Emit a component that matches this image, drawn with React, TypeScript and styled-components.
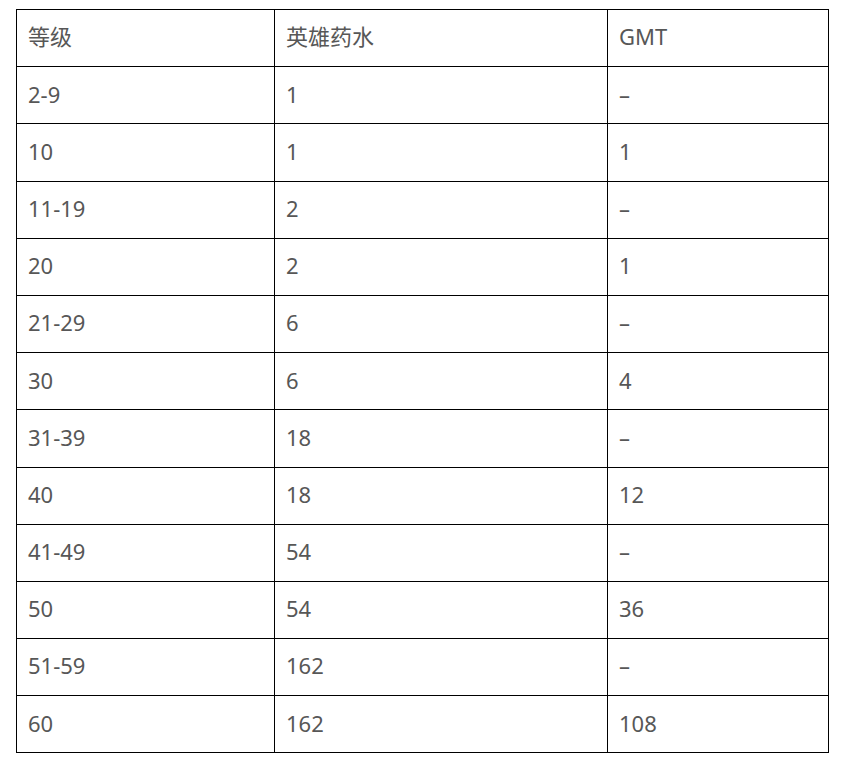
import React from 'react';
import styled, { createGlobalStyle } from 'styled-components';

// -- 데이터 --
interface LevelRow {
  level: string;
  potion: string;
  gmt: string;
}

const rows: LevelRow[] = [
  { level: '2-9', potion: '1', gmt: '–' },
  { level: '10', potion: '1', gmt: '1' },
  { level: '11-19', potion: '2', gmt: '–' },
  { level: '20', potion: '2', gmt: '1' },
  { level: '21-29', potion: '6', gmt: '–' },
  { level: '30', potion: '6', gmt: '4' },
  { level: '31-39', potion: '18', gmt: '–' },
  { level: '40', potion: '18', gmt: '12' },
  { level: '41-49', potion: '54', gmt: '–' },
  { level: '50', potion: '54', gmt: '36' },
  { level: '51-59', potion: '162', gmt: '–' },
  { level: '60', potion: '162', gmt: '108' },
];

// -- 스타일 --
const GlobalStyle = createGlobalStyle`
  body {
    margin: 0;
    background: #ffffff;
    font-family: "Noto Sans", "Noto Sans CJK SC", sans-serif;
  }
`;

const Page = styled.div`
  padding: 9px 0 0 16px;
`;

const Table = styled.table`
  width: 812px;
  border-collapse: collapse;
  table-layout: fixed;
  color: #575757;
  font-size: 22px;
`;

const Col = styled.col<{ $width: number }>`
  width: ${(props): number => props.$width}px;
`;

const Row = styled.tr`
  height: 57.2px;
`;

const Cell = styled.td`
  border: 1px solid #000000;
  padding: 0 11px 3px;
  vertical-align: middle;
  line-height: 1.2;
  font-weight: 400;
  text-align: left;
`;

const HeadCell = styled(Cell).attrs({ as: 'th' })``;

const App: React.FC = () => {
  return (
    <>
      <GlobalStyle />
      <Page>
        <Table>
          <colgroup>
            <Col $width={258} />
            <Col $width={333} />
            <Col $width={221} />
          </colgroup>
          <thead>
            <Row>
              <HeadCell>等级</HeadCell>
              <HeadCell>英雄药水</HeadCell>
              <HeadCell>GMT</HeadCell>
            </Row>
          </thead>
          <tbody>
            {rows.map((row) => (
              <Row key={row.level}>
                <Cell>{row.level}</Cell>
                <Cell>{row.potion}</Cell>
                <Cell>{row.gmt}</Cell>
              </Row>
            ))}
          </tbody>
        </Table>
      </Page>
    </>
  );
};

export default App;
